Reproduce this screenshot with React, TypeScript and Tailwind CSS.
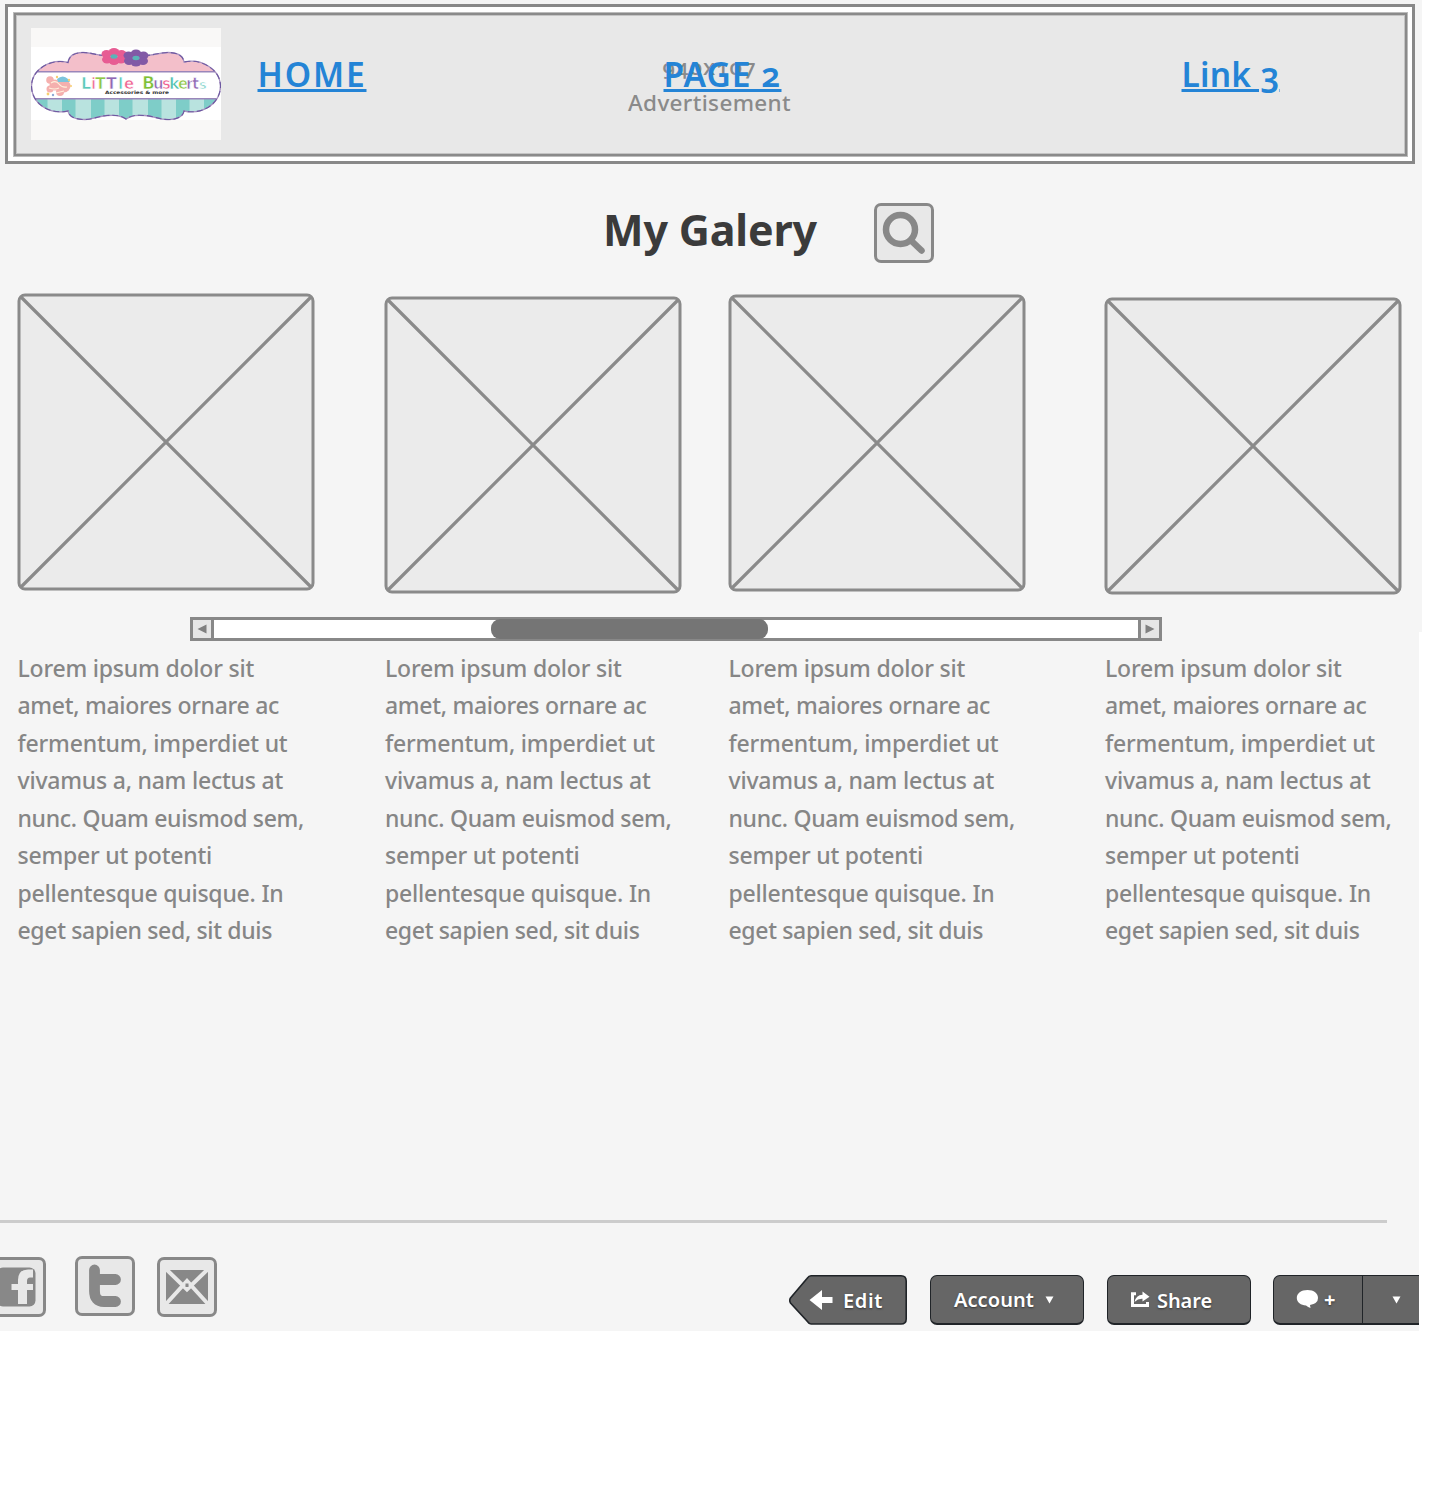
import { useLayoutEffect, useRef, useState } from 'react';
import type { ReactNode } from 'react';

/** Single line of text whose tracking is adjusted so that it spans `width` pixels. */
function FitText({ text, width, className = '' }: { text: string; width: number; className?: string }) {
  const ref = useRef<HTMLSpanElement>(null);
  const [spacing, setSpacing] = useState(0);
  useLayoutEffect(() => {
    const el = ref.current;
    if (!el) return;
    el.style.letterSpacing = '0px';
    setSpacing((width - el.getBoundingClientRect().width) / text.length);
  }, [text, width]);
  return (
    <span ref={ref} className={`inline-block whitespace-pre ${className}`} style={{ letterSpacing: `${spacing}px` }}>
      {text}
    </span>
  );
}

const LINES: [string, number][] = [
  ['Lorem ipsum dolor sit', 236.5],
  ['amet, maiores ornare ac', 261.5],
  ['fermentum, imperdiet ut', 270],
  ['vivamus a, nam lectus at', 265.5],
  ['nunc. Quam euismod sem,', 286.5],
  ['semper ut potenti', 194.5],
  ['pellentesque quisque. In', 266],
  ['eget sapien sed, sit duis', 254.5],
];

function Paragraph({ className }: { className: string }) {
  return (
    <p className={`flex w-[298px] shrink-0 flex-col items-start text-[23px] leading-[37.45px] font-medium text-[#868686] ${className}`}>
      {LINES.map(([t, w]) => (
        <FitText key={t} text={t} width={w} />
      ))}
    </p>
  );
}

function Placeholder({ className }: { className: string }) {
  return (
    <svg viewBox="0 0 298 298" className={`h-[298px] w-[298px] shrink-0 ${className}`}>
      <rect x="2" y="2" width="294" height="294" rx="6" fill="#ebebeb" />
      <path d="M3.500 3.500L294.500 294.500M294.500 3.500L3.500 294.500" stroke="#8a8a8a" strokeWidth="3.200" />
      <rect x="2" y="2" width="294" height="294" rx="6" fill="none" stroke="#8a8a8a" strokeWidth="3" />
    </svg>
  );
}

function Flower({ x, y, color }: { x: number; y: number; color: string }) {
  return (
    <g transform={`translate(${x} ${y})`} fill={color}>
      <ellipse cx="0" cy="-4" rx="5.500" ry="4.500" />
      <ellipse cx="7.500" cy="-2.500" rx="5" ry="4" />
      <ellipse cx="7" cy="3" rx="5" ry="4" />
      <ellipse cx="0" cy="4" rx="5.500" ry="4.500" />
      <ellipse cx="-7" cy="3" rx="5" ry="4" />
      <ellipse cx="-7.500" cy="-2.500" rx="5" ry="4" />
      <ellipse rx="3.500" ry="2.200" fill="#5ab4b8" />
    </g>
  );
}

const BADGE =
  'M37 34.500C38 27 45 24.500 52 24.500C61 24.500 66 27.500 73 27.500H114C122 27.500 128 24.500 137 24.500C145 24.500 152 27 153 34C171 30 189.500 42 189.500 58C189.500 76 171 87 153 83C152 89 145 92 136 91.500C128 91.500 123 88 114 87.500C106 87 101 87 95 91C89 87 84 87 76 87.500C67 88 62 91.500 54 91.500C45 91.500 38 89 37 83C19 87 .500 76 .500 58C.500 42 19 30 37 34.500Z';

const LETTERS: [string, number, string, number][] = [
  ['L', 50, '#5cc9ba', 16], ['i', 60, '#ef6f9a', 15], ['T', 64, '#8fc648', 16], ['T', 75, '#9068b3', 16], ['l', 87, '#5cc9ba', 15], ['e', 93, '#ef5f8f', 15],
  ['B', 111, '#7fbf35', 17], ['u', 122, '#9068b3', 15], ['s', 131, '#ef5f8f', 15], ['k', 138, '#4cc0ae', 16], ['e', 147, '#8fc648', 15], ['r', 155, '#9068b3', 15], ['t', 161, '#9068b3', 15], ['s', 168, '#83d3ca', 13],
];

function Logo() {
  return (
    <svg viewBox="0 0 190 112" className="h-[112px] w-[190px] shrink-0">
      <defs>
        <clipPath id="badge">
          <path d={BADGE} />
        </clipPath>
      </defs>
      <rect width="190" height="112" fill="#f9f8f7" />
      <rect y="19" width="190" height="73" fill="#fff" />
      <g clipPath="url(#badge)">
        <rect y="20" width="190" height="24" fill="#f3bfca" />
        <rect y="71" width="190" height="22" fill="#b9e3df" />
        {[3, 31, 60, 88, 117, 145, 173].map((x) => (
          <rect key={x} x={x} y="71" width="13.500" height="22" fill="#7ecdc8" />
        ))}
        <path d="M0 43.700H190M0 70.800H190" stroke="#9a86ba" strokeWidth="1.500" />
      </g>
      <path d={BADGE} fill="none" stroke="#a792c0" strokeWidth="1.300" />
      <path d={BADGE} fill="none" stroke="#6d58a0" strokeWidth="1.100" strokeDasharray="6 3" />
      <Flower x={83} y={28.500} color="#e75c93" />
      <Flower x={105} y={30} color="#8259a6" />
      <g fill="#f5b0ae">
        <circle cx="19" cy="52" r="3.800" />
        <circle cx="24" cy="57" r="5.500" />
        <circle cx="33" cy="58" r="6.500" />
        <circle cx="19" cy="61" r="3.500" />
        <circle cx="29" cy="64" r="4" />
      </g>
      <path d="M26 51q6-5 11 0l2 3-12 0z" fill="#7cc5dc" />
      <path d="M20 55q5-3 8 1t8 3M18 60q6 2 10 0M25 65l8-2" fill="none" stroke="#fff0dc" strokeWidth="1.200" />
      <g fill="#f6cf70">
        <circle cx="26" cy="49" r="1.200" />
        <circle cx="38" cy="52" r="1.200" />
        <circle cx="17" cy="66" r="1.400" />
        <circle cx="40" cy="58" r="1" />
      </g>
      <circle cx="22" cy="67" r="1.200" fill="#8fa9d4" />
      <g fontFamily="'DejaVu Sans', sans-serif" fontWeight="700">
        {LETTERS.map(([c, x, color, size], i) => (
          <text key={i} x={x} y={60.5} fontSize={size} fill={color} stroke="#fff" strokeWidth=".7">
            {c}
          </text>
        ))}
      </g>
      <text x="74" y="65.500" fontFamily="'DejaVu Sans', sans-serif" fontSize="4.500" fontWeight="700" fill="#333" textLength="64" lengthAdjust="spacingAndGlyphs">
        Accessories &amp; more
      </text>
    </svg>
  );
}

function Tile({ className = '', children }: { className?: string; children: ReactNode }) {
  return (
    <div className={`h-[60px] w-[60px] shrink-0 rounded-[7px] border-[3px] border-[#888] bg-[#e8e8e8] ${className}`}>
      <svg viewBox="3 3 54 54" className="h-[54px] w-[54px]">
        {children}
      </svg>
    </div>
  );
}

function Caret({ className = '' }: { className?: string }) {
  return (
    <svg viewBox="0 0 9 8" className={`h-[8px] w-[9px] shrink-0 ${className}`}>
      <path d="M.500 .500H8.500L4.500 7.500Z" fill="#fff" />
    </svg>
  );
}

const BUTTON =
  'flex h-[50px] shrink-0 items-center border-[1.5px] border-b-2 border-[#202428] bg-[#666] text-[20px] font-semibold leading-[50px] text-white [text-shadow:0_1px_2px_#333]';

export default function App() {
  return (
    <div className="h-[1500px] w-[1441px] overflow-hidden bg-white font-['Noto_Sans','Open_Sans',sans-serif]">
      <section className="relative z-10 h-[632px] w-[1422px] bg-[#f5f5f5] pt-1">
        <header className="ml-[5px] h-[160px] w-[1410px] border-[3px] border-[#888] bg-white p-[4.500px] pt-[5px]">
          <div className="h-[145px] border border-[#bbb] bg-[#e8e8e8]">
            <div className="h-[143px] border-2 border-[#8a8a8a]">
              <div className="relative flex h-[139px] border border-[#c4c4c4] pt-[12px] pl-[14px]">
                <Logo />
                <div className="absolute top-[33px] left-[612px] flex w-[162px] flex-col items-center text-[22.500px] leading-[35.500px] font-medium text-[#8a8a8a]">
                  <FitText text="940x107" width={94} className="oldstyle-nums" />
                  <FitText text="Advertisement" width={163} />
                </div>
                <nav className="relative flex text-[33.500px] leading-[48px] font-semibold text-[#2484d6]">
                  <a className="mt-[22px] ml-[37px] w-[109px]"><FitText text="HOME" width={109} className="underline decoration-[3px] underline-offset-[1.500px]" /></a>
                  <a className="mt-[22px] ml-[297px] w-[119px]"><FitText text="PAGE 2" width={118} className="oldstyle-nums underline decoration-[3px] underline-offset-[1.500px]" /></a>
                  <a className="mt-[22px] ml-[399px] w-[98px]"><FitText text="Link 3" width={98} className="oldstyle-nums underline decoration-[3px] underline-offset-[1.500px]" /></a>
                </nav>
              </div>
            </div>
          </div>
        </header>

        <div className="mt-[39px] flex h-[60px] pl-[603px]">
          <h1 className="mt-px w-[271px] text-[43px] leading-[52px] font-bold text-[#3b3b3b]">
            <FitText text="My Galery" width={214} />
          </h1>
          <Tile>
            <path d="M37 37.500L47.500 47.500" stroke="#888" strokeWidth="6.500" strokeLinecap="round" />
            <circle cx="26.500" cy="26.500" r="14.500" fill="#eaeaea" stroke="#888" strokeWidth="6.500" />
          </Tile>
        </div>

        <div className="mt-[30px] flex h-[324px] items-start pl-[17px]">
          <Placeholder className="" />
          <Placeholder className="mt-[3px] ml-[69px]" />
          <Placeholder className="mt-[1px] ml-[46px]" />
          <Placeholder className="mt-[4px] ml-[78px]" />
        </div>

        <div className="ml-[190px] flex h-[24px] w-[972px] border-[3px] border-[#888] bg-white">
          <div className="flex w-[21px] items-center justify-center border-r-[3px] border-[#888] bg-[#e6e6e6]">
            <svg viewBox="0 0 10 10" className="h-[10px] w-[10px]"><path d="M9.500 .500V9.500L.500 5Z" fill="#808080" /></svg>
          </div>
          <div className="-my-px ml-[277px] w-[277px] rounded-[9px] bg-[#757575]" />
          <div className="ml-auto flex w-[21px] items-center justify-center border-l-[3px] border-[#888] bg-[#e6e6e6]">
            <svg viewBox="0 0 10 10" className="h-[10px] w-[10px]"><path d="M.500 .500V9.500L9.500 5Z" fill="#808080" /></svg>
          </div>
        </div>
      </section>

      <section className="h-[699px] w-[1419px] overflow-hidden bg-[#f5f5f5] pt-[18px]">
        <div className="flex h-[570px] items-start">
          <Paragraph className="ml-[17.500px]" />
          <Paragraph className="ml-[69.500px]" />
          <Paragraph className="ml-[45.500px]" />
          <Paragraph className="ml-[78.500px]" />
        </div>
        <div className="h-[3px] w-[1387px] bg-[#ccc]" />
        <footer className="flex items-start pt-[33px]">
          <Tile className="mt-px -ml-[14px]">
            <rect x="11" y="10.500" width="38.500" height="39" rx="6" fill="#888" />
            <path d="M47 12.500V20.500H44Q41 20.500 41 24V27H47V33H41V47H32V33H25.500V27H32V23Q32 12.500 42 12.500Z" fill="#e8e8e8" />
          </Tile>
          <Tile className="ml-[29px]">
            <path d="M19.500 14V35Q19.500 45.500 29 45.500H40.500M19.500 23.500H40.500" fill="none" stroke="#888" strokeWidth="10.800" strokeLinecap="round" strokeLinejoin="round" />
          </Tile>
          <Tile className="mt-px ml-[22px]">
            <rect x="9" y="13" width="42" height="34" fill="#888" />
            <path d="M9 12L30 32.500L51 12M9 47L30 24L51 47" fill="none" stroke="#e8e8e8" strokeWidth="4" />
            <rect x="28.500" y="26.500" width="3" height="3.500" fill="#888" />
          </Tile>

          <div className="mt-[19px] ml-[572px] flex">
            <button className="relative flex h-[50px] w-[118px] shrink-0 text-[20px] leading-[51px] font-semibold text-white [text-shadow:0_1px_2px_#333]">
              <svg viewBox="0 0 118 50" className="absolute h-[50px] w-[118px]">
                <path d="M22 .800H112Q117.200 .800 117.200 6V44Q117.200 49 112 49H22Q20 49 18 46L1.500 28Q0 25.500 1.500 23L18 3.500Q20 .800 22 .800Z" fill="#666" stroke="#202428" strokeWidth="1.600" />
                <path d="M20.500 25L33 15V22H43.500V28H33V35Z" fill="#fff" />
              </svg>
              <span className="relative ml-[54px]"><FitText text="Edit" width={40} /></span>
            </button>
            <button className={`${BUTTON} ml-[23px] w-[154px] rounded-[7px] pl-[23px]`}>
              <FitText text="Account" width={80} />
              <Caret className="ml-[11px]" />
            </button>
            <button className={`${BUTTON} ml-[23px] w-[144px] rounded-[7px] pt-[2px] pl-[22px]`}>
              <svg viewBox="0 0 20 17" className="mr-[7px] mb-[3px] h-[17px] w-[20px] shrink-0">
                <path d="M6 2.800H2.500V14.500H17.500V11" fill="none" stroke="#fff" strokeWidth="3" />
                <path d="M4.500 11Q6 4 12.500 3.800V.500L19.500 5.800L12.500 10.500V7.800Q8 7.500 4.500 11Z" fill="#fff" />
              </svg>
              <FitText text="Share" width={55} />
            </button>
            <button className={`${BUTTON} ml-[22px] w-[91px] rounded-l-[7px] pl-[22px]`}>
              <svg viewBox="0 0 23 20" className="mb-[2px] h-[20px] w-[23px] shrink-0">
                <path d="M11.500 1C5 1 .800 4.500 .800 9C.800 13.300 5 16.200 10 16.500Q12 18 14.500 19L14 16Q22 14.500 22 9C22 4.500 18 1 11.500 1Z" fill="#fff" />
              </svg>
              <FitText text="+" width={13} className="mt-px ml-[5px] font-bold" />
            </button>
            <button className={`${BUTTON} -ml-[2px] w-[75px] pl-[29px]`}>
              <Caret />
            </button>
          </div>
        </footer>
      </section>
    </div>
  );
}
